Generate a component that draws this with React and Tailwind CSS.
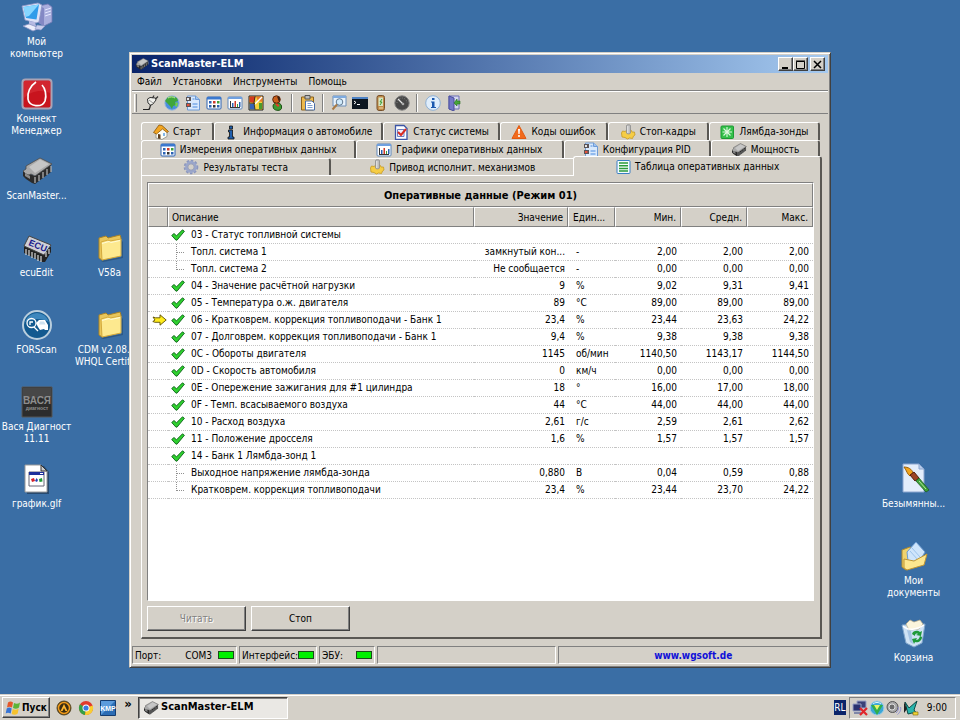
import React, { useState } from "react";

// ---------- small 16px icons ----------

const Chip = ({ className = "w-4 h-4" }) => (
  <svg viewBox="0 0 32 32" className={className}>
    <path d="M2 16v5l3 3 6 4 3 1 16-12V9L14 21z" fill="#2b2b2b" />
    <path d="M2 16l3-2V11L19 3l12 6-17 12-4-2-2 1-3-1z" fill="#a9a9a9" stroke="#4a4a4a" strokeWidth=".8" />
    <path d="M8 12 19 4.500l9 4.500-14 9z" fill="#c6c6c6" />
    <path d="M14 22v6M18 20v6M22 17v6M26 14v6M30 11v6" fill="none" stroke="#b8b8b8" strokeWidth="1.200" />
    <path d="M4 18v3l5 3v-3z" fill="#8b8b8b" />
  </svg>
);

const Plug = () => (
  <svg viewBox="0 0 16 16" className="w-4 h-4">
    <path d="M0 14.500h5c3 0 1-3 3-5" fill="none" stroke="#222" strokeWidth="1.200" />
    <path d="M4.500 4 7 2.500l5.500.5.500 2-3.500 4.500-2 .5L5 8z" fill="#f1f1ec" stroke="#333" />
    <path d="M9.500 3 11 .5M12.500 4 15 1.500" stroke="#333" strokeWidth="1.200" />
    <path d="M6 5l4 3" stroke="#999" />
  </svg>
);

const Globe = () => (
  <svg viewBox="0 0 16 16" className="w-4 h-4">
    <circle cx="8" cy="8" r="7.200" fill="#4a8fe0" stroke="#9fb9d8" />
    <path d="M1 6l3-4 4-1 5 2 1 3-3 1 1 3-3 1-1 3-2-3-3-3z" fill="#3fa63a" />
    <path d="M12 7l2 1-1 4-2-1z" fill="#74cf4c" />
    <path d="M4 3c2-1.500 5-1.500 7 0" stroke="#c7f09a" fill="none" />
  </svg>
);

const PidConfig = () => (
  <svg viewBox="0 0 16 16" className="w-4 h-4">
    <path d="M2.500 1h8l4 3.500V15h-12z" fill="#d9e9fc" stroke="#6f9bd6" />
    <path d="M10.500 1v3.500h4" fill="#9cc3f2" stroke="#6f9bd6" />
    <path d="M1 2h5v4H1zM1 8h5v4H1z" fill="#5b5457" />
    <path d="M2 3h2v2H2z" fill="#e6e6e6" />
    <path d="M2 9h2.500v2H2z" fill="#e4513c" />
    <path d="M7.500 4h2M7.500 9h5M7.500 12h5" stroke="#4a8be0" />
  </svg>
);

const GridIcon = () => (
  <svg viewBox="0 0 16 16" className="w-4 h-4">
    <rect x="1" y="2" width="14" height="12" rx="1" fill="#fff" stroke="#2a62b4" />
    <path d="M1 2h14v2.500H1z" fill="#3a78cf" />
    <path d="M3 6h2.500v2.500H3zM3 10h2.500v2.500H3z" fill="#2a62b4" />
    <path d="M7 6h2.500v2.500H7z" fill="#cf3a2a" />
    <path d="M7 10h2.500v2.500H7z" fill="#333" />
    <path d="M11 6h2.500v2.500H11z" fill="#3d9e3a" />
    <path d="M11 10h2.500v2.500H11z" fill="#2a62b4" />
  </svg>
);

const ChartIcon = () => (
  <svg viewBox="0 0 16 16" className="w-4 h-4">
    <rect x="1" y="2" width="14" height="12" rx="1" fill="#fff" stroke="#5f87bb" />
    <path d="M1 2h14v2H1z" fill="#6fa0e0" />
    <path d="M3.500 6v7M3 12.500h10" stroke="#333" />
    <path d="M5 8h1.500v4H5z" fill="#2a62b4" />
    <path d="M7.500 6H9v6H7.500z" fill="#cf3a2a" />
    <path d="M10 9h1v3h-1z" fill="#3d9e3a" />
    <path d="M12 7h1.500v5H12z" fill="#2a62b4" />
  </svg>
);

const Puzzle = () => (
  <svg viewBox="0 0 16 16" className="w-4 h-4">
    <path d="M1 1h14v14H1z" fill="#f5d13c" stroke="#222" />
    <path d="M1.500 1.500h6L6 8 1.500 7z" fill="#d43a20" />
    <path d="M8 1.500h6.500V7L10 6z" fill="#e87a2a" />
    <path d="M1.500 8.500 6 9l1 5.500H1.500z" fill="#3563b5" />
    <path d="M14 2 7 9" stroke="#fff" strokeWidth="1.500" />
    <path d="M7 1.500 6 8l1 6.500M1.500 8 7 8.500" stroke="#222" strokeWidth=".8" fill="none" />
    <path d="M11 8h3v6h-3z" fill="#4c9b2e" />
  </svg>
);

const Driver = () => (
  <svg viewBox="0 0 16 16" className="w-4 h-4">
    <path d="M4 11c0-4 8-4 8.500 0v2.500c-1 2.500-6 2.500-8 0z" fill="#3d9a32" stroke="#1d5016" />
    <ellipse cx="7.500" cy="4.500" rx="3.800" ry="3.700" fill="#c9601e" stroke="#5b260c" />
    <path d="M8 1.500c3 0 4 3 2 5.500z" fill="#3a2214" />
    <path d="M6 9l3 3 1.500-1.500L8 8.500z" fill="#e6392a" />
  </svg>
);

const Clipboard = () => (
  <svg viewBox="0 0 16 16" className="w-4 h-4">
    <path d="M1.500 2h12v13h-12z" fill="#edb94d" stroke="#8a611c" />
    <path d="M5 .5h5V4H5z" fill="#bbb" stroke="#555" />
    <path d="M5.500 6H12l2.500 2.500V15h-9z" fill="#fff" stroke="#4a6ea8" />
    <path d="M7.500 8.500H11M7.500 10.500h5M7.500 12.500h5" stroke="#7ea0d0" />
  </svg>
);

const SearchDoc = () => (
  <svg viewBox="0 0 16 16" className="w-4 h-4">
    <path d="M2 1h13v10H2z" fill="#e8f2fb" stroke="#6d8fb8" />
    <path d="M2 1h13v2H2z" fill="#7fabdf" />
    <circle cx="8.500" cy="7" r="3.300" fill="#cfe9fa" stroke="#61788f" />
    <path d="M6 9.500 1.500 14.500" stroke="#a97a44" strokeWidth="2" />
  </svg>
);

const Terminal = () => (
  <svg viewBox="0 0 16 16" className="w-4 h-4">
    <path d="M0 2h16v12H0z" fill="#0d1620" />
    <path d="M0 2h16v2H0z" fill="#4d82c5" />
    <path d="M2 6l2 1.500L2 9M5 9.500h3" stroke="#fff" fill="none" />
  </svg>
);

const Phone = () => (
  <svg viewBox="0 0 16 16" className="w-4 h-4">
    <rect x="4" y=".5" width="7.500" height="15" rx="2" fill="#c08a48" stroke="#77512a" />
    <path d="M5.500 2.500h4.500V11H5.500z" fill="#d6e6c4" />
    <path d="M9 4 7 7h2l-2 3" stroke="#3d9a32" fill="none" />
    <path d="M6 13h4" stroke="#f0d9a8" />
  </svg>
);

const Gauge = () => (
  <svg viewBox="0 0 16 16" className="w-4 h-4">
    <circle cx="8" cy="8" r="7.200" fill="#484848" stroke="#808080" />
    <path d="M3 8a5 5 0 0 1 10 0" stroke="#888" fill="none" strokeDasharray="1 1.500" />
    <path d="M4 4l5 5" stroke="#e6e6e6" strokeWidth="1.300" />
    <circle cx="9" cy="9" r="1.300" fill="#aaa" />
  </svg>
);

const InfoRound = () => (
  <svg viewBox="0 0 16 16" className="w-4 h-4">
    <circle cx="8" cy="8" r="7.300" fill="#dfedfb" stroke="#8fb0d4" />
    <path d="M7 3h2.500v2H7zM6 6.500h3.500V12H11v1H6v-1h1V7.500H6z" fill="#1b58ae" />
  </svg>
);

const InfoDark = () => (
  <svg viewBox="0 0 16 16" className="w-4 h-4">
    <path d="M6.500 2h3v3h-3zM5.500 6h4v7H11v2H5v-2h1.500V8h-1z" fill="#1f5fae" stroke="#111" strokeWidth=".8" />
  </svg>
);

const Exit = () => (
  <svg viewBox="0 0 16 16" className="w-4 h-4">
    <path d="M3 1h10v13H3z" fill="#d5d7ef" stroke="#6b6fb5" />
    <path d="M3 1l5 2v13l-5-2z" fill="#7478c8" stroke="#4a4e9d" />
    <path d="M14 6h-3V4L8 8l3 3V9h3z" fill="#46a53a" stroke="#256b1e" strokeWidth=".6" />
  </svg>
);

const House = () => (
  <svg viewBox="0 0 16 16" className="w-4 h-4">
    <path d="M3 8v6l6 1.500 5-3V6L9 2z" fill="#fdfdf5" stroke="#8b8b80" strokeWidth=".8" />
    <path d="M.5 8.500 6 1l3 .5 6.500 6-1.500 1L9.500 5 3.500 10z" fill="#f2a623" stroke="#8c5606" strokeWidth=".8" />
    <path d="M5 10l2.500.5V15L5 14.500z" fill="#5a3c1c" />
    <path d="M10 9h2v3h-2z" fill="#7fb5e8" />
  </svg>
);

const CheckDoc = () => (
  <svg viewBox="0 0 16 16" className="w-4 h-4">
    <path d="M2.500 1.500H11l3 3v11H2.500z" fill="#fff" stroke="#3c55a5" strokeWidth="1.300" />
    <path d="M4.500 5.500h6.500v7H4.500z" fill="#eef" stroke="#6b7ec0" />
    <path d="M5 8l3 3 5-6" stroke="#d92b20" strokeWidth="2" fill="none" />
  </svg>
);

const Warning = () => (
  <svg viewBox="0 0 16 16" className="w-4 h-4">
    <path d="M8 1.500 15 14.500H1z" fill="#f26a1b" stroke="#e05a12" strokeLinejoin="round" />
    <path d="M7 5h2l-.4 5H7.400zM7.200 11h1.600v2H7.200z" fill="#fff" />
  </svg>
);

const Actuator = () => (
  <svg viewBox="0 0 16 16" className="w-4 h-4">
    <path d="M1.500 9l1-2 2.500.5L7 6h4l1 2 2.500 0 .5 3-1.500 1-1 2.500-3-.5-2 1-2.500-1.500-3-.5z" fill="#f6cd45" stroke="#c79a22" strokeWidth=".8" />
    <path d="M6.500 1.500c0-1 4-1 4 0V9c0 1.200-4 1.200-4 0z" fill="#bdbdbd" stroke="#8c8c8c" strokeWidth=".8" />
    <path d="M7.800 2v7" stroke="#ececec" />
  </svg>
);

const Lambda = () => (
  <svg viewBox="0 0 16 16" className="w-4 h-4">
    <rect x="2" y="2" width="12.500" height="12.500" rx="1" fill="#35c04a" stroke="#1d9a33" />
    <path d="M8 3v10M3.500 8H13M4.500 4.500l7 7M11.500 4.500l-7 7" stroke="#dff7df" strokeWidth="1.100" />
  </svg>
);

const Gear = () => (
  <svg viewBox="0 0 16 16" className="w-4 h-4">
    <circle cx="8" cy="8" r="6.300" fill="none" stroke="#8b96bd" strokeWidth="2" strokeDasharray="2.500 1.600" />
    <circle cx="8" cy="8" r="4.600" fill="none" stroke="#9aa6cb" strokeWidth="2.600" />
    <circle cx="8" cy="8" r="3.200" fill="#d4d0c8" stroke="#7c88b2" strokeWidth=".7" />
  </svg>
);

const ListIcon = () => (
  <svg viewBox="0 0 16 16" className="w-4 h-4">
    <rect x="2" y="1.500" width="13" height="13" rx="1" fill="#f4fbff" stroke="#3b7fc4" />
    <path d="M4 4h9M4 6.700h9M4 9.400h9M4 12h9" stroke="#2b9b3b" strokeWidth="1.500" />
  </svg>
);

const Check = () => (
  <svg viewBox="0 0 14 12" className="w-[14px] h-3">
    <path d="M.7 6.500 3 4.500l2.500 2.300L11.500.8l1.900 1.500L6 11.200 4.800 11z" fill="#2fd02f" stroke="#0b5f17" strokeWidth=".9" />
  </svg>
);

const Arrow = () => (
  <svg viewBox="0 0 15 12" className="w-[15px] h-3">
    <path d="M1 3l2.500.8H8V.8L14.200 6 8 11.200V8.300H3L.8 7.500 3 6z" fill="#ffec1c" stroke="#5c4f00" strokeWidth=".9" />
  </svg>
);

// ---------- desktop icons ----------

const Computer = () => (
  <svg viewBox="0 0 32 32" className="w-8 h-8">
    <path d="M18 5l9-2 4 3v15l-8 4-5-3z" fill="#a9aedd" stroke="#7279b4" strokeWidth=".8" />
    <path d="M18 5l5 2v18l-5-3z" fill="#8388c4" />
    <path d="M24 9l6-2M24 12l6-2M24 15l6-2" stroke="#e3e6ff" />
    <path d="M1 5l16-3 4 2-3 17-3 1L4 19z" fill="#dde2f7" stroke="#8a93c4" strokeWidth=".8" />
    <path d="M2.500 6 18 3.500l-2.500 15L5 17z" fill="#2f9cea" />
    <path d="M2.500 6 18 3.500 8 15l-3.500 1z" fill="#86d6ff" />
    <path d="M8 20l6 1 1 4-7 1z" fill="#b5bae2" />
    <path d="M2 25l6-2 8 3 3 1-7 3z" fill="#eceefb" stroke="#8a93c4" strokeWidth=".8" />
    <path d="M16 24l8 1-4 4-6-1z" fill="#c9cdec" stroke="#8a93c4" strokeWidth=".6" />
  </svg>
);

const Connect = () => (
  <svg viewBox="0 0 32 32" className="w-8 h-8">
    <rect x="1.500" y="1.500" width="29" height="29" rx="3" fill="#c8141e" stroke="#aaa3b5" strokeWidth="2" />
    <path d="M3 3h26v12C20 11 10 13 3 20z" fill="#e04048" opacity=".4" />
    <path d="M15 4C9 8 6 15 7 21c1 8 14 9 17 2 2-6 0-13-3-16" fill="none" stroke="#fff" strokeWidth="1.700" />
  </svg>
);

const EcuChip = () => (
  <svg viewBox="0 0 32 32" className="w-8 h-8">
    <path d="M3 14v7l18 9h3l6-10v-5z" fill="#222" />
    <path d="M8 4 30 13l-7 10L3 14z" fill="#cfcfd6" stroke="#444" />
    <path d="M5 17v6M8 18v6M11 20v6M14 21v6M17 23v6M20 24v6M25 20v5M28 17v5" stroke="#d8d8d8" strokeWidth="1.200" />
    <text x="7" y="13" transform="rotate(22 7 13)" fontSize="9" fontWeight="bold" fill="#1a1a8c" fontFamily="Liberation Sans, sans-serif">ECU</text>
  </svg>
);

const Folder = () => (
  <svg viewBox="0 0 32 32" className="w-8 h-8">
    <path d="M7 29 28 25V9l1 1v16L9 30z" fill="#27496e" opacity=".6" />
    <path d="M5 6l7-2 2 2 12-3 1 3-2 18L8 28 5 26z" fill="#e9c65a" stroke="#a98225" />
    <path d="M7 10l7-2 2 1 11-2v17L8 28z" fill="#fde98f" stroke="#d3a93c" />
    <path d="M8 11.500l7-2 2 1 9-2" stroke="#fffbd8" fill="none" />
  </svg>
);

const ForScan = () => (
  <svg viewBox="0 0 32 32" className="w-8 h-8">
    <circle cx="16" cy="16" r="14" fill="#12598f" stroke="#b9cedd" strokeWidth="2" />
    <path d="M4 13a12.500 12.500 0 0 1 24 0c-8-4-16-4-24 0z" fill="#3d87bd" />
    <circle cx="10.500" cy="14" r="4.500" fill="none" stroke="#fff" strokeWidth="1.300" />
    <path d="M9 16v-3h3M13 18l4 4" stroke="#fff" strokeWidth="1.300" fill="none" />
    <path d="M15 14l3-3h6l3 5v5h-3l-1-1-4 1-2-3z" fill="#fff" />
    <path d="M19 12.500h4l1.500 3H18z" fill="#cfe2f0" />
  </svg>
);

const Vasya = () => (
  <svg viewBox="0 0 32 32" className="w-8 h-8">
    <path d="M1 1h30v30H1z" fill="#2c2c2c" stroke="#555" />
    <path d="M2 2h28v9L2 13z" fill="#474747" />
    <text x="16" y="18" textAnchor="middle" fontSize="10" fontWeight="bold" fill="#8e8e8e" fontFamily="Liberation Sans, sans-serif">ВАСЯ</text>
    <text x="16" y="24" textAnchor="middle" fontSize="5" fontWeight="bold" fill="#8e8e8e" fontFamily="Liberation Sans, sans-serif">диагност</text>
  </svg>
);

const GlfFile = () => (
  <svg viewBox="0 0 32 32" className="w-8 h-8">
    <path d="M6 3h17l5 6v22H6z" fill="#27496e" />
    <path d="M4 2h16l6 6v21H4z" fill="#fff" stroke="#999" />
    <path d="M20 2v6h6z" fill="#ccc" stroke="#333" />
    <path d="M8 9h15v14H8z" fill="#fff" stroke="#667" />
    <path d="M8 9h15v3H8z" fill="#1d2f9b" />
    <path d="M19 10.500h3" stroke="#fff" />
    <path d="M10 16l3-1 1 3-3 1z" fill="#d3222a" />
    <path d="M15.500 15l1.500 2-1 2-2-1z" fill="#2440b5" />
    <path d="M18 16l3-1 .5 3.500-3 .5z" fill="#1e9a35" />
  </svg>
);

const PaintFile = () => (
  <svg viewBox="0 0 32 32" className="w-8 h-8">
    <path d="M5 1h16l5 5v23H5z" fill="#e3edfb" stroke="#8aa5cf" />
    <path d="M21 1v5h5z" fill="#b8cdec" stroke="#8aa5cf" />
    <path d="M6 4c4 0 8 2 9 6l-3 3c-3-2-3-5-6-9z" fill="#f2a51d" stroke="#99600c" />
    <path d="M12 12l4-3 5 6-4 3z" fill="#9c4426" stroke="#55200d" />
    <path d="M18 18l3-3 10 12-3 2z" fill="#3da13a" stroke="#1e5e1c" strokeWidth=".8" />
    <path d="M21 18l7 8" stroke="#b4e59a" />
  </svg>
);

const Documents = () => (
  <svg viewBox="0 0 32 32" className="w-8 h-8">
    <path d="M4 10l8-3 4 2v18l-8 3-4-3z" fill="#f0d36e" stroke="#b08a2b" />
    <path d="M9 12 18 2l9 10-8 13-9-4z" fill="#cfe5fb" stroke="#6c9bd1" />
    <path d="M14 8l8 9M12 11l8 9" stroke="#9cc3ec" />
    <path d="M6 28V19l10 2 13-7-3 11-17 5z" fill="#fde78f" stroke="#c09532" />
  </svg>
);

const RecycleBin = () => (
  <svg viewBox="0 0 32 32" className="w-8 h-8">
    <path d="M4 8l23-1-3 19-8 4-8-4z" fill="#cfe3f5" stroke="#7fa5cb" />
    <path d="M8 7l4-4 4 2 6-2 3 4-4 5-10 1z" fill="#fbf5dc" stroke="#b7ab88" strokeWidth=".7" />
    <path d="M5 9c5 5 14 4 21-1" stroke="#fff" fill="none" strokeWidth="1.500" />
    <path d="M9 13l3 12 3 2-2-13z" fill="#a5c4e4" />
    <path d="M14 17c1-4 6-4 8-2l2-1-1 5-5-1 2-1c-2-1-3 0-3 2zM24 20c0 4-4 6-7 5l-1 2-2-5 5-1-1 2c2 0 3-1 4-4z" fill="#1f9a3a" />
  </svg>
);

// ---------- taskbar icons ----------

const WindowsFlag = () => (
  <svg viewBox="0 0 16 16" className="w-4 h-4">
    <path d="M3 2.500c2-1.500 3.500-1 5 0L7 7.500c-2-1-3.500-1-5 0z" fill="#e5572a" />
    <path d="M9 3c2 1 4 1 6-.5L14 7.500c-2 1.500-4 1.500-6 .5z" fill="#5db437" />
    <path d="M1.700 8.500c2-1.500 3.500-1 5 0l-1 5c-2-1-3.500-1-5 0z" fill="#3674d6" />
    <path d="M7.700 9c2 1 4 1 6-.5l-1 5c-2 1.500-4 1.500-6 .5z" fill="#f6c22d" />
  </svg>
);

const Aimp = () => (
  <svg viewBox="0 0 16 16" className="w-4 h-4">
    <circle cx="8" cy="8" r="7" fill="#3a2c12" stroke="#5b4a24" />
    <circle cx="8" cy="8" r="5.500" fill="none" stroke="#f09a1a" strokeWidth="1.500" />
    <path d="M8 4l3.500 7H9.500L8 8l-1.500 3h-2z" fill="#ffb62e" />
  </svg>
);

const Chrome = () => (
  <svg viewBox="0 0 16 16" className="w-4 h-4">
    <circle cx="8" cy="8" r="7" fill="#e13b2c" />
    <path d="M8 8 2 4.300A7 7 0 0 0 7 15z" fill="#35a045" />
    <path d="M8 8l6.600-2.500A7 7 0 0 1 7 15z" fill="#f9cf2f" />
    <circle cx="8" cy="8" r="3.500" fill="#fff" />
    <circle cx="8" cy="8" r="2.600" fill="#3b7be0" />
  </svg>
);

const Kmp = () => (
  <svg viewBox="0 0 16 16" className="w-4 h-4">
    <path d="M.5.5h15v15H.5z" fill="#2b6cb4" stroke="#143c70" />
    <path d="M1 1h14L1 15z" fill="#5b9bdc" />
    <text x="8" y="11" textAnchor="middle" fontSize="7" fontWeight="bold" fill="#fff" fontFamily="Liberation Sans, sans-serif">KMP</text>
  </svg>
);

const NetOff = () => (
  <svg viewBox="0 0 16 16" className="w-4 h-4">
    <path d="M5 1h9v7H5z" fill="#3b4278" stroke="#9ba3c6" />
    <path d="M1 4h8v7H1z" fill="#2b3270" stroke="#9ba3c6" />
    <path d="M2 13h7" stroke="#8087a8" strokeWidth="2" />
    <path d="M8 8l7 7M15 8l-7 7" stroke="#e0262a" strokeWidth="2.200" />
  </svg>
);

const TrayGlobe = () => (
  <svg viewBox="0 0 16 16" className="w-4 h-4">
    <circle cx="8" cy="8" r="7" fill="#3aa7d8" stroke="#a7cfe3" />
    <path d="M2 5h12L8 15z" fill="#2fae4c" />
    <path d="M5 5l3 5 3-5z" fill="#e9f36a" />
    <path d="M4 4c2-2 6-2 8 0" stroke="#e4f7ff" fill="none" />
  </svg>
);

const Speaker = () => (
  <svg viewBox="0 0 16 16" className="w-4 h-4">
    <circle cx="6.500" cy="7" r="5.500" fill="#a8a8a8" stroke="#555" />
    <circle cx="6" cy="7" r="3" fill="#6b6b6b" stroke="#ddd" />
    <path d="M12 7c1 2 0 4-2 6M14.500 7c1 3-1 6-3 7.500" stroke="#8f8fd0" fill="none" />
  </svg>
);

const Kaspersky = () => (
  <svg viewBox="0 0 16 16" className="w-4 h-4">
    <path d="M2 2l4 6 8-7-3 9 3 4-5-1-4 1z" fill="#28b5ad" stroke="#0d4a47" />
    <path d="M1 2v11l3-4z" fill="#222" />
    <path d="M10 12h5v3h-5z" fill="#f1d335" stroke="#7c6a0c" strokeWidth=".6" />
  </svg>
);

// ---------- data ----------

const leftIcons = [
  { icon: <Computer />, label: "Мой\nкомпьютер" },
  { icon: <Connect />, label: "Коннект\nМенеджер" },
  { icon: <Chip className="w-8 h-8" />, label: "ScanMaster..." },
  { icon: <EcuChip />, label: "ecuEdit" },
  { icon: <ForScan />, label: "FORScan" },
  { icon: <Vasya />, label: "Вася Диагност\n11.11" },
  { icon: <GlfFile />, label: "график.glf" },
];

const folderIcons = [
  { icon: <Folder />, label: "V58a" },
  { icon: <Folder />, label: "CDM v2.08.24\nWHQL Certified" },
];

const rightIcons = [
  { icon: <PaintFile />, label: "Безымянны..." },
  { icon: <Documents />, label: "Мои\nдокументы" },
  { icon: <RecycleBin />, label: "Корзина" },
];

const menu = ["Файл", "Установки", "Инструменты", "Помощь"];

const toolbar = [
  { title: "Подключить", icon: <Plug /> },
  { title: "Язык", icon: <Globe /> },
  { title: "Конфигурация", icon: <PidConfig /> },
  { title: "Измерения", icon: <GridIcon /> },
  { title: "Графики", icon: <ChartIcon /> },
  { title: "Модули", icon: <Puzzle /> },
  { title: "Водитель", icon: <Driver /> },
  null,
  { title: "Отчёт", icon: <Clipboard /> },
  null,
  { title: "Поиск", icon: <SearchDoc /> },
  { title: "Терминал", icon: <Terminal /> },
  { title: "Устройство", icon: <Phone /> },
  { title: "Приборы", icon: <Gauge /> },
  null,
  { title: "О программе", icon: <InfoRound /> },
  { title: "Выход", icon: <Exit /> },
];

const tabRows = [
  [
    { label: "Старт", icon: <House />, grow: "flex-[72]" },
    { label: "Информация о автомобиле", icon: <InfoDark />, grow: "flex-[170]" },
    { label: "Статус системы", icon: <CheckDoc />, grow: "flex-[118]" },
    { label: "Коды ошибок", icon: <Warning />, grow: "flex-[107]" },
    { label: "Стоп-кадры", icon: <Actuator />, grow: "flex-[101]" },
    { label: "Лямбда-зонды", icon: <Lambda />, grow: "flex-[111]" },
  ],
  [
    { label: "Измерения оперативных данных", icon: <GridIcon />, grow: "flex-[216]" },
    { label: "Графики оперативных данных", icon: <ChartIcon />, grow: "flex-[208]" },
    { label: "Конфигурация PID", icon: <PidConfig />, grow: "flex-[147]" },
    { label: "Мощность", icon: <Chip />, grow: "flex-[108]" },
  ],
];

const rows = [
  { name: "03 - Статус топливной системы", kind: "check" },
  { name: "Топл. система 1", kind: "mid", v: ["замкнутый кон...", "-", "2,00", "2,00", "2,00"] },
  { name: "Топл. система 2", kind: "end", v: ["Не сообщается", "-", "0,00", "0,00", "0,00"] },
  { name: "04 - Значение расчётной нагрузки", kind: "check", v: ["9", "%", "9,02", "9,31", "9,41"] },
  { name: "05 - Температура о.ж. двигателя", kind: "check", v: ["89", "°C", "89,00", "89,00", "89,00"] },
  { name: "06 - Кратковрем. коррекция топливоподачи - Банк 1", kind: "check", current: true, v: ["23,4", "%", "23,44", "23,63", "24,22"] },
  { name: "07 - Долговрем. коррекция топливоподачи - Банк 1", kind: "check", v: ["9,4", "%", "9,38", "9,38", "9,38"] },
  { name: "0C - Обороты двигателя", kind: "check", v: ["1145", "об/мин", "1140,50", "1143,17", "1144,50"] },
  { name: "0D - Скорость автомобиля", kind: "check", v: ["0", "км/ч", "0,00", "0,00", "0,00"] },
  { name: "0E - Опережение зажигания для #1 цилиндра", kind: "check", v: ["18", "°", "16,00", "17,00", "18,00"] },
  { name: "0F - Темп. всасываемого воздуха", kind: "check", v: ["44", "°C", "44,00", "44,00", "44,00"] },
  { name: "10 - Расход воздуха", kind: "check", v: ["2,61", "г/с", "2,59", "2,61", "2,62"] },
  { name: "11 - Положение дросселя", kind: "check", v: ["1,6", "%", "1,57", "1,57", "1,57"] },
  { name: "14 - Банк 1 Лямбда-зонд 1", kind: "check" },
  { name: "Выходное напряжение лямбда-зонда", kind: "mid", v: ["0,880", "В", "0,04", "0,59", "0,88"] },
  { name: "Кратковрем. коррекция топливоподачи", kind: "end", v: ["23,4", "%", "23,44", "23,70", "24,22"] },
];

// ---------- pieces ----------

const DesktopColumn = ({ items, className }) => (
  <div className={`flex flex-col w-[73px] ${className}`}>
    {items.map((item) => (
      <button key={item.label} className="h-[77px] flex flex-col items-center gap-[3px] text-white leading-3">
        {item.icon}
        <span className="whitespace-pre text-center">{item.label}</span>
      </button>
    ))}
  </div>
);

const Tab = ({ tab, active, onSelect }) => (
  <button
    role="tab"
    aria-selected={active === tab.label}
    onClick={() => onSelect(tab.label)}
    className={`${tab.grow} min-w-0 flex items-center justify-center gap-1 rounded-t-[3px] border-t border-l border-white border-r-2 border-r-[#5a5854] whitespace-nowrap`}
  >
    {tab.icon}
    {tab.label}
  </button>
);

const TreeMark = ({ kind }) => {
  if (kind === "check") return <Check />;
  return (
    <svg viewBox="0 0 14 16" className="w-[14px] h-4" shapeRendering="crispEdges">
      <path
        d={kind === "mid" ? "M5.500 0v16M6 8.500h8" : "M5.500 0v9M6 8.500h8"}
        stroke="#909090"
        strokeDasharray="1 1"
        fill="none"
      />
    </svg>
  );
};

const Led = () => <span className="relative w-4 h-2 shrink-0 bg-[#00f000] border border-[#1c4a1c]"></span>;

const th = "h-5 p-0 font-normal border-t border-l border-white border-r border-r-[#808080] border-b border-b-[#808080]";
const td = "h-[17px] p-0 leading-4 border-b border-dotted border-[#c4c4c4] whitespace-nowrap";
const statusCell = "flex items-center border border-[#808080] border-r-white border-b-white px-[2px]";
const captionBtn =
  "w-[15px] h-[14px] bg-[#d4d0c8] flex items-center justify-center border border-white border-r-[#404040] border-b-[#404040] shadow-[inset_-1px_-1px_#808080]";
const pushBtn =
  "w-[99px] h-[25px] border border-white border-r-[#404040] border-b-[#404040] shadow-[inset_-1px_-1px_#808080]";

const DataTable = () => (
  <div className="flex-1 bg-white border border-[#808080] border-r-white border-b-white overflow-hidden">
    <table className="w-full table-fixed border-separate border-spacing-0">
      <caption className="h-6 leading-[23px] bg-[#d4d0c8] font-bold text-[11px] border border-white border-r-[#808080] border-b-[#808080]">
        Оперативные данные (Режим 01)
      </caption>
      <colgroup>
        <col className="w-5" />
        <col />
        <col className="w-[94px]" />
        <col className="w-[47px]" />
        <col className="w-[66px]" />
        <col className="w-[66px]" />
        <col className="w-[66px]" />
      </colgroup>
      <thead className="bg-[#d4d0c8]">
        <tr>
          <th className={th}></th>
          <th className={`${th} text-left pl-[3px]`}>Описание</th>
          <th className={`${th} text-right pr-1`}>Значение</th>
          <th className={`${th} text-left pl-1`}>Един...</th>
          <th className={`${th} text-right pr-1`}>Мин.</th>
          <th className={`${th} text-right pr-1`}>Средн.</th>
          <th className={`${th} text-right pr-1`}>Макс.</th>
        </tr>
      </thead>
      <tbody>
        {rows.map((row) => {
          const [value, unit, min, avg, max] = row.v || [];
          return (
            <tr key={row.name}>
              <td className={td}>{row.current && <div className="pl-1"><Arrow /></div>}</td>
              <td className={td}>
                <div className="h-4 flex items-center gap-[6px] pl-[3px]">
                  <TreeMark kind={row.kind} />
                  {row.name}
                </div>
              </td>
              <td className={`${td} text-right pr-[3px]`}>{value}</td>
              <td className={`${td} pl-2`}>{unit}</td>
              <td className={`${td} text-right pr-1`}>{min}</td>
              <td className={`${td} text-right pr-1`}>{avg}</td>
              <td className={`${td} text-right pr-1`}>{max}</td>
            </tr>
          );
        })}
      </tbody>
    </table>
  </div>
);

const ScanMaster = () => {
  const [active, setActive] = useState("Таблица оперативных данных");

  return (
    <div className="absolute left-[129px] right-[129px] top-[52px] bottom-[26px] flex flex-col p-[2px] pb-[3px] bg-[#d4d0c8] border border-[#d4d0c8] border-r-[#404040] border-b-[#404040] shadow-[inset_1px_1px_#fff,inset_-1px_-1px_#808080]">
      <div className="h-[18px] flex items-center px-[3px] gap-[2px] text-white font-bold text-[11px] bg-linear-to-r from-[#0a246a] to-[#a6caf0]">
        <Chip className="w-[14px] h-[14px]" />
        <h1 className="flex-1">ScanMaster-ELM</h1>
        <div className="flex">
          <button aria-label="Свернуть" className={captionBtn}>
            <svg viewBox="0 0 9 9" className="w-[9px] h-[9px]"><path d="M1 7h6v2H1z" /></svg>
          </button>
          <button aria-label="Развернуть" className={captionBtn}>
            <svg viewBox="0 0 9 9" className="w-[9px] h-[9px]"><path d="M.5 1.500h8v7h-8zM0 1h9" fill="none" stroke="#000" /></svg>
          </button>
        </div>
        <button aria-label="Закрыть" className={captionBtn}>
          <svg viewBox="0 0 9 9" className="w-[9px] h-[9px]"><path d="M1 1l7 7M8 1 1 8" stroke="#000" strokeWidth="1.500" /></svg>
        </button>
      </div>

      <nav className="h-[18px] flex items-center gap-[11px] px-[5px] border-b border-[#808080]">
        {menu.map((item) => (
          <button key={item}>{item}</button>
        ))}
      </nav>

      <div className="h-[23px] flex items-center border-t border-white border-b border-b-[#808080] pl-[2px]">
        <div className="w-[3px] h-[18px] mr-[3px] border-l border-white border-r border-r-[#808080]"></div>
        {toolbar.map((tool, i) =>
          tool ? (
            <button key={tool.title} aria-label={tool.title} className="w-[21px] flex justify-center">
              {tool.icon}
            </button>
          ) : (
            <div key={i} className="w-[2px] h-[18px] mx-1 border-l border-[#808080] border-r border-r-white"></div>
          )
        )}
      </div>

      <div className="flex-1 flex flex-col pt-2 pl-[9px] pr-[6px] pb-[7px]">
        <div role="tablist">
          {tabRows.map((tabs, i) => (
            <div key={i} className="h-[18px] flex pr-[2px]">
              {tabs.map((tab) => (
                <Tab key={tab.label} tab={tab} active={active} onSelect={setActive} />
              ))}
            </div>
          ))}
          <div className="h-[17px] flex items-end">
            <Tab tab={{ label: "Результаты теста", icon: <Gear />, grow: "flex-[189] h-[17px]" }} active={active} onSelect={setActive} />
            <button
              role="tab"
              aria-selected={false}
              onClick={() => setActive("Привод исполнит. механизмов")}
              className="flex-[244] h-[17px] flex items-center justify-center gap-1 border-t border-white"
            >
              <Actuator />
              Привод исполнит. механизмов
            </button>
            <button
              role="tab"
              aria-selected={true}
              className="relative z-10 flex-[248] h-5 -mb-px flex items-center justify-center gap-1 bg-[#d4d0c8] rounded-t-[3px] border-t border-l border-white border-r-2 border-r-[#5a5854]"
            >
              <ListIcon />
              Таблица оперативных данных
            </button>
          </div>
        </div>

        <div role="tabpanel" className="flex-1 flex flex-col p-[6px] pl-[5px] border border-white border-r-2 border-b-2 border-r-[#5a5854] border-b-[#5a5854]">
          <DataTable />
          <div className="flex gap-[5px] pt-[5px]">
            <button disabled className={`${pushBtn} text-[#808080] [text-shadow:1px_1px_#fff]`}>Читать</button>
            <button className={pushBtn}>Стоп</button>
          </div>
        </div>
      </div>

      <div className="h-[18px] flex gap-[2px]">
        <div className={`${statusCell} w-[105px] justify-between`}>
          <span>Порт:</span>
          <span className="flex items-center gap-[6px]">COM3 <Led /></span>
        </div>
        <div className={`${statusCell} w-[78px] justify-between whitespace-nowrap`}>
          <span className="min-w-0">Интерфейс:</span>
          <Led />
        </div>
        <div className={`${statusCell} w-[56px] justify-between`}>
          ЭБУ:
          <Led />
        </div>
        <div className={`${statusCell} flex-[179]`}></div>
        <div className={`${statusCell} flex-[272] justify-center`}>
          <a href="#" className="font-bold text-[#1010d8]">www.wgsoft.de</a>
        </div>
      </div>
    </div>
  );
};

const Taskbar = () => (
  <footer className="h-7 flex items-center gap-1 px-[2px] bg-[#d4d0c8] border-t border-[#d4d0c8] shadow-[inset_0_1px_#fff]">
    <button className="h-[21px] w-12 flex items-center justify-center gap-[1px] font-bold border border-white border-r-[#404040] border-b-[#404040] shadow-[inset_-1px_-1px_#808080]">
      <WindowsFlag />
      Пуск
    </button>
    <div className="flex items-center gap-[6px] pl-[2px]">
      <button aria-label="AIMP"><Aimp /></button>
      <button aria-label="Chrome"><Chrome /></button>
      <button aria-label="KMPlayer"><Kmp /></button>
      <button aria-label="Ещё" className="w-3 pb-2 text-[13px] leading-3 font-bold">»</button>
    </div>
    <button className="w-[150px] h-[22px] flex items-center gap-[2px] px-1 font-bold text-[11px] bg-[#eae8e4] border border-[#404040] border-r-white border-b-white shadow-[inset_1px_1px_#808080]">
      <Chip />
      ScanMaster-ELM
    </button>
    <div className="ml-auto flex items-center gap-[3px] pr-[2px]">
      <span className="w-3 h-[15px] leading-[15px] overflow-hidden bg-[#0a246a] text-white text-center">RL</span>
      <div className="h-[22px] flex items-center gap-[1px] pl-[2px] pr-2 border border-[#808080] border-r-white border-b-white">
        <NetOff />
        <TrayGlobe />
        <Speaker />
        <Kaspersky />
        <time className="pl-[7px]">9:00</time>
      </div>
    </div>
  </footer>
);

const App = () => {
  return (
    <div className="h-screen flex flex-col overflow-hidden bg-[#3a6ea5] text-black text-[10px] font-['DejaVu_Sans_Condensed','DejaVu_Sans',sans-serif]">
      <main className="relative flex-1 flex">
        <DesktopColumn items={leftIcons} className="pt-[1px]" />
        <DesktopColumn items={folderIcons} className="pt-[232px]" />
        <DesktopColumn items={rightIcons} className="pt-[463px] ml-auto mr-[10px]" />
        <ScanMaster />
      </main>
      <Taskbar />
    </div>
  );
};

export default App;
